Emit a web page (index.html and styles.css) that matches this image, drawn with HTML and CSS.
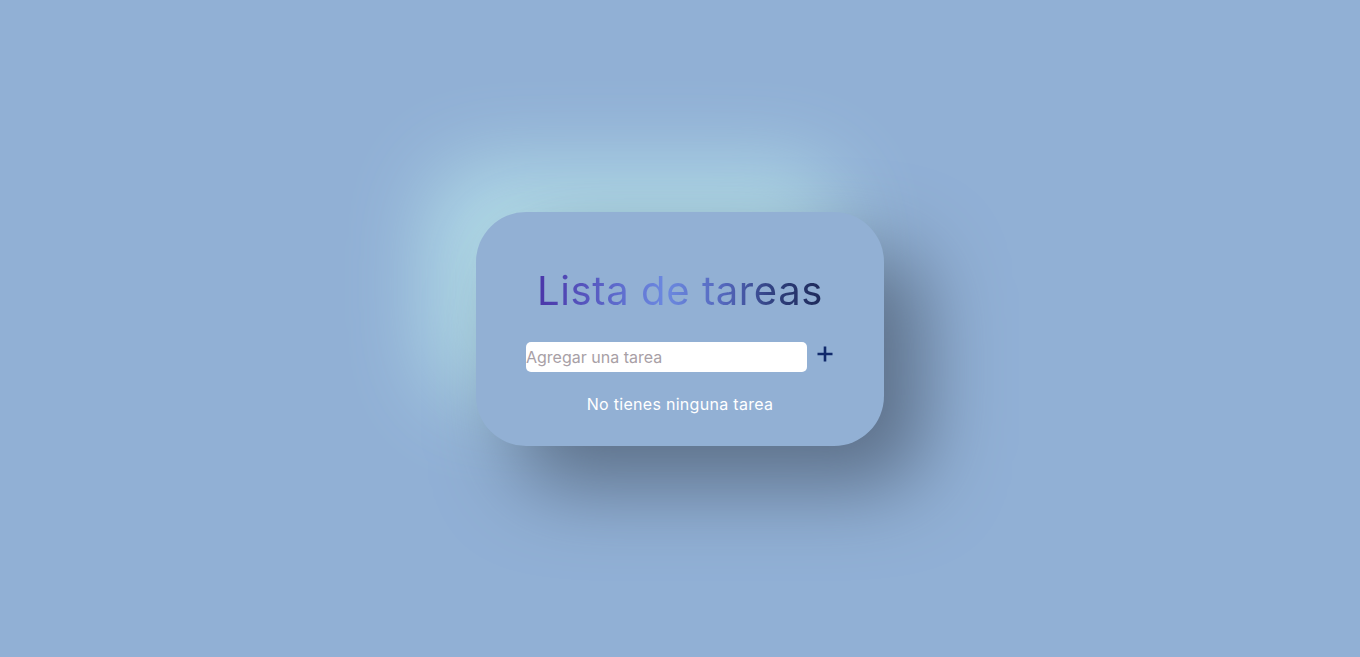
FILE: index.html
```html
<!DOCTYPE html>
<html lang="es">
<head>
<meta charset="utf-8">
<title>Lista de tareas</title>
<link rel="stylesheet" href="styles.css">
</head>
<body>
  <main class="card">
    <h1 class="title">Lista de tareas</h1>
    <form class="add-row">
      <input class="task-input" type="text" placeholder="Agregar una tarea">
      <button class="add-btn" type="button" aria-label="Agregar">
        <svg width="18" height="18" viewBox="0 0 18 18"><path d="M9 1.5v15M1.5 9h15" stroke="#10296b" stroke-width="2.6" fill="none"/></svg>
      </button>
    </form>
    <p class="empty">No tienes ninguna tarea</p>
  </main>
</body>
</html>
```

FILE: styles.css
```css
html, body {
  margin: 0;
  height: 100%;
}
body {
  background: #91b0d5;
  display: flex;
  align-items: center;
  justify-content: center;
  font-family: "Inter", "Noto Sans", sans-serif;
  overflow: hidden;
}
.card {
  width: 408px;
  height: 234px;
  box-sizing: border-box;
  background: #92b0d4;
  border-radius: 50px;
  box-shadow: 40px 40px 80px #5c6f88, -45px -45px 85px #b3dde8;
  display: flex;
  flex-direction: column;
  align-items: center;
  padding-top: 56px;
}
.title {
  margin: 0;
  font-size: 40px;
  font-weight: 400;
  line-height: 46px;
  letter-spacing: 0.6px;
  background: linear-gradient(90deg, #4a35a8 0%, #5f6fcf 30%, #6c89e0 45%, #5467bd 65%, #2c3c78 85%, #1e2a5a 100%);
  -webkit-background-clip: text;
  background-clip: text;
  color: transparent;
}
.add-row {
  display: flex;
  align-items: center;
  gap: 9px;
  margin: 28px 0 0 0;
  padding-left: 0;
}
.task-input {
  width: 281px;
  height: 30px;
  box-sizing: border-box;
  border: none;
  border-radius: 5px;
  background: #fff;
  padding: 0;
  font-family: "Inter", "Noto Sans", sans-serif;
  font-size: 16px;
  outline: none;
}
.task-input::placeholder {
  color: #a8a0a6;
}
.add-btn {
  background: none;
  border: none;
  padding: 0;
  width: 18px;
  height: 18px;
  display: flex;
  margin-top: -6px;
}
.empty {
  margin: 22px 0 0 0;
  color: #ffffff;
  font-size: 16px;
  line-height: 20px;
  letter-spacing: 0.3px;
}
```
